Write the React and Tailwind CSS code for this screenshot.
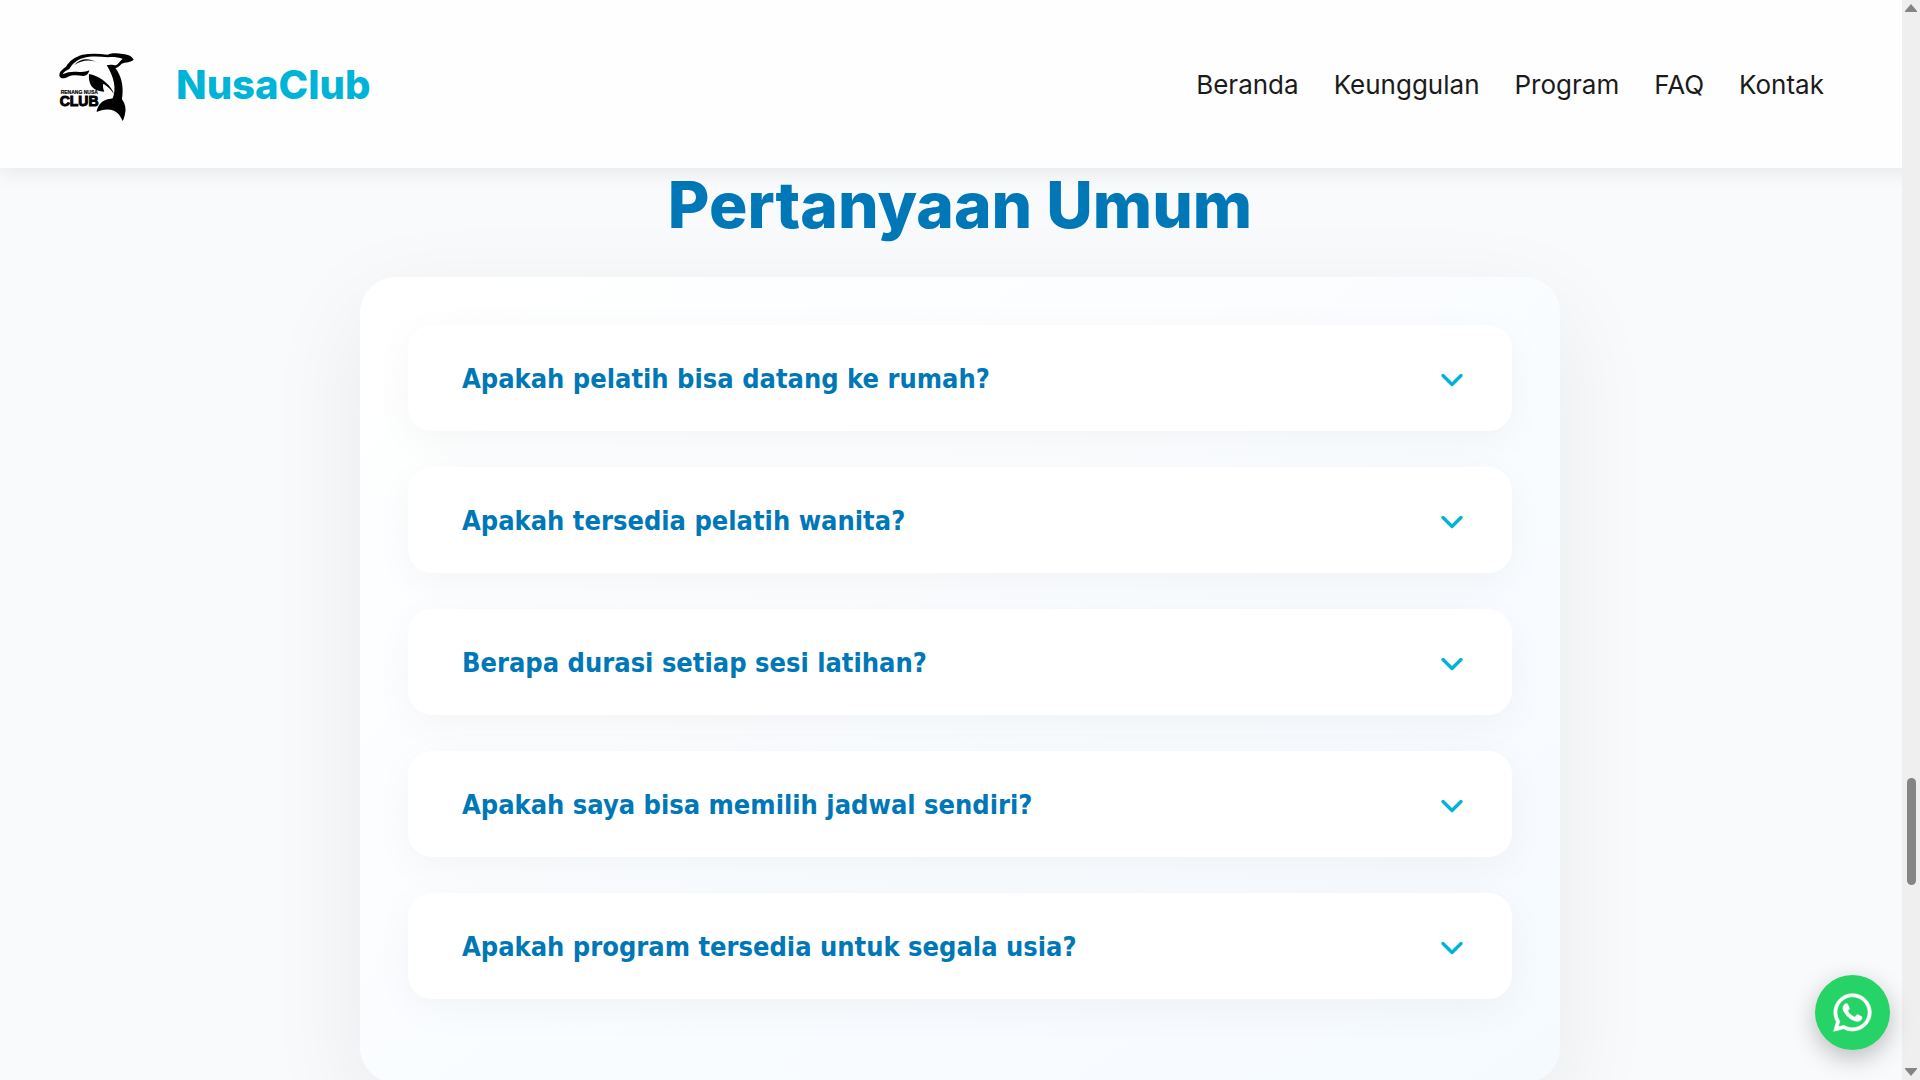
import { useState } from 'react';
import { ChevronDown } from 'lucide-react';
import { FaWhatsapp } from 'react-icons/fa';

const navLinks = [
  { label: 'Beranda', href: '#beranda' },
  { label: 'Keunggulan', href: '#keunggulan' },
  { label: 'Program', href: '#program' },
  { label: 'FAQ', href: '#faq' },
  { label: 'Kontak', href: '#kontak' },
];

const questions = [
  'Apakah pelatih bisa datang ke rumah?',
  'Apakah tersedia pelatih wanita?',
  'Berapa durasi setiap sesi latihan?',
  'Apakah saya bisa memilih jadwal sendiri?',
  'Apakah program tersedia untuk segala usia?',
];

const Logo = () => (
  <svg className="w-[120px] h-[110px] shrink-0" viewBox="0 0 360 330" role="img" aria-label="Renang Nusa Club">
    {/* back, snout and tail fin */}
    <path d="M58 137 C58 124 66 118 78 110 C88 92 106 80 128 74 C152 69 178 71 203 74 C215 69 232 69 248 72 C262 73 276 78 281 89 C274 97 256 96 245 101 C238 108 232 114 226 114 C243 136 251 166 247 198 C246 204 246 206 246 208 C256 222 259 238 255 252 C253 262 251 268 248 273 C242 258 234 248 222 242 C206 236 186 238 170 246 C171 232 180 218 192 212 C202 207 212 207 218 205 C230 178 222 140 200 106 C212 102 222 106 228 106 C236 102 240 92 248 86 C234 82 218 80 204 82 C176 79 150 78 130 84 C110 90 96 102 88 117 C80 121 70 126 68 133 C84 124 102 124 118 126 C132 127 140 124 148 121 C146 131 140 138 130 138 C114 136 98 134 84 140 C74 146 62 148 58 137 Z" fill="#000" />
    {/* eye line */}
    <path d="M103 105 C118 86 144 82 168 95 C144 88 122 92 103 105 Z" fill="#000" />
    {/* side fin */}
    <path d="M147 132 C166 136 186 146 198 158 C210 168 218 180 222 192 C212 178 202 168 190 161 C187 168 190 178 193 185 C174 184 158 176 152 164 C147 154 146 142 147 132 Z" fill="#000" />
    <text x="62" y="192" fontSize="15" className="font-['Liberation_Sans'] font-bold" stroke="#000" strokeWidth="0.5">RENANG NUSA</text>
    <text x="59" y="227" fontSize="42" className="font-['Liberation_Sans'] font-bold" stroke="#000" strokeWidth="3">CLUB</text>
  </svg>
);

const Header = () => (
  <header className="relative z-10 flex items-center justify-between bg-[#fefefe] h-[168px] pl-10 pr-24 shadow-[0_4px_20px_rgba(0,0,0,0.08)]">
    <a href="#beranda" className="flex items-center gap-4 pt-0.5">
      <Logo />
      <span className="text-[40px] leading-none font-extrabold text-[#00b4d8]">NusaClub</span>
    </a>
    <nav className="flex items-center gap-[35px] text-[26px] text-[#1b1b1b]">
      {navLinks.map((link) => (
        <a key={link.href} href={link.href} className="hover:text-[#00b4d8]">
          {link.label}
        </a>
      ))}
    </nav>
  </header>
);

const FaqItem = ({ question, open, onToggle }) => (
  <button
    type="button"
    aria-expanded={open}
    onClick={onToggle}
    className="w-full h-[106px] flex items-center justify-between pl-[54px] pr-[42px] pt-[3px] bg-white rounded-3xl text-left shadow-[0_10px_40px_rgba(0,0,0,0.04)]"
  >
    <span className="font-['DejaVu_Sans_Condensed','Noto_Sans',sans-serif] font-bold text-[27px] text-[#0077b6]">
      {question}
    </span>
    <ChevronDown size={36} strokeWidth={2.25} className={`text-[#00b4d8] transition-transform ${open ? 'rotate-180' : ''}`} />
  </button>
);

const Scrollbar = () => (
  <div className="fixed inset-y-0 right-0 z-20 w-[18px] bg-[#efefef] flex flex-col items-center justify-between py-1" aria-hidden="true">
    <svg className="w-3 h-2" viewBox="0 0 12 8">
      <path d="M6 0 L12 7 V8 H0 V7 Z" fill="#858585" />
    </svg>
    <div className="absolute top-[72%] w-[9px] h-[107px] rounded-full bg-[#858585]" />
    <svg className="w-3 h-2" viewBox="0 0 12 8">
      <path d="M6 8 L12 1 V0 H0 V1 Z" fill="#858585" />
    </svg>
  </div>
);

const App = () => {
  const [openIndex, setOpenIndex] = useState(null);

  return (
    <div className="h-screen overflow-hidden bg-[#f8fafc] font-['Inter',sans-serif]">
      <Header />

      <section id="faq" className="px-6">
        <h2 className="text-center font-extrabold text-[64px] leading-[73px] text-[#0077b6] mb-9">Pertanyaan Umum</h2>
        <div className="max-w-[1200px] mx-auto rounded-[36px] p-12 pb-[84px] flex flex-col gap-9 bg-linear-145 from-white to-[#f5faff] shadow-[0_30px_100px_rgba(0,0,0,0.07)]">
          {questions.map((question, index) => (
            <FaqItem
              key={question}
              question={question}
              open={openIndex === index}
              onToggle={() => setOpenIndex(openIndex === index ? null : index)}
            />
          ))}
        </div>
      </section>

      {/* WhatsApp button */}
      <a
        href="#kontak"
        aria-label="WhatsApp"
        className="fixed right-[30px] bottom-[30px] z-30 size-[75px] rounded-full bg-[#25d366] text-white flex items-center justify-center shadow-[0_8px_25px_rgba(0,0,0,0.25)]"
      >
        <FaWhatsapp size={43} stroke="currentColor" strokeWidth={8} />
      </a>

      <Scrollbar />
    </div>
  );
};

export default App;
